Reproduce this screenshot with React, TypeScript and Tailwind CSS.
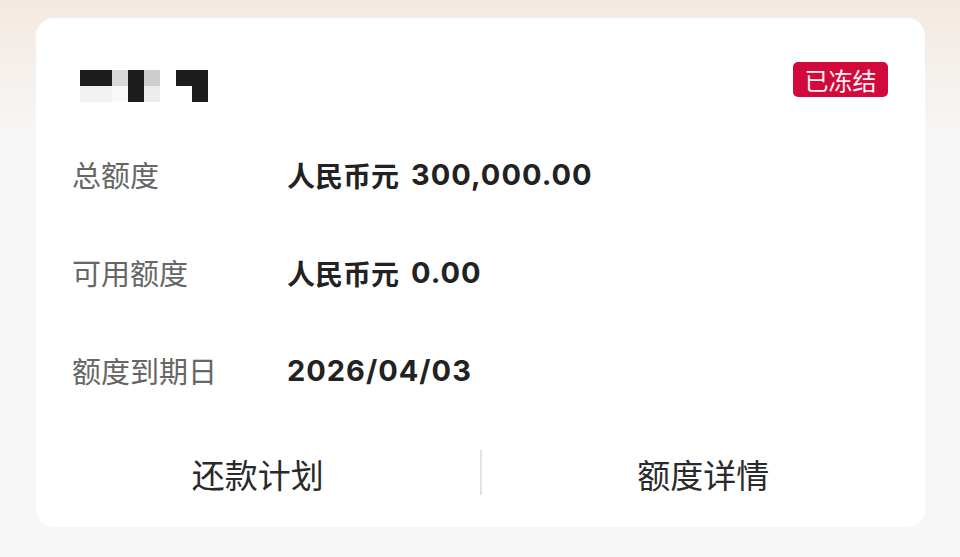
import React from "react";

const cjk = { fontFamily: '"Noto Sans CJK SC", "Noto Sans", sans-serif' };
const num = { fontFamily: 'Inter, Roboto, "Noto Sans CJK SC", sans-serif' };

const D = "#1d1d1d";
const pixels: string[][] = [
  [D, D, "#d8d8d8", D, "#cdcdcd", "#ffffff", D, D],
  ["#f1f1f1", "#f1f1f1", "#f8f8f8", D, "#ececec", "#ffffff", "#ffffff", D],
];

function Row({ label, cn, value }: { label: string; cn?: string; value: string }) {
  return (
    <div className="h-[98px] flex items-center px-[36px]">
      <div className="w-[215px] text-[29px] text-[#666666] leading-none -mt-[3px]" style={cjk}>
        {label}
      </div>
      <div className="flex items-center text-[#222222] font-bold leading-none -mt-[3px]">
        {cn && (
          <span className="text-[28px] mr-[12px]" style={cjk}>
            {cn}
          </span>
        )}
        <span className="text-[29px] tracking-[1px]" style={num}>
          {value}
        </span>
      </div>
    </div>
  );
}

export default function App() {
  return (
    <div className="w-[960px] h-[557px] overflow-hidden bg-[linear-gradient(180deg,#f3e9e1_0px,#f5f0ec_70px,#f7f7f7_140px)] pt-[18px] pl-[36px] pr-[35px]">
      <div className="h-[509px] bg-white rounded-[18px] flex flex-col">
        <div className="mt-[44px] h-[35px] flex items-start justify-between pl-[44px] pr-[37px]">
          <div className="mt-[8px] grid grid-cols-[repeat(8,16px)] grid-rows-[repeat(2,16px)] blur-[0.4px]">
            {pixels.flat().map((c, i) => (
              <div key={i} style={{ backgroundColor: c }} />
            ))}
          </div>
          <div
            className="w-[95px] h-[35px] rounded-[5px] bg-[#d20a3c] text-[#fff2f4] text-[24px] leading-none flex items-center justify-center"
            style={cjk}
          >
            已冻结
          </div>
        </div>
        <div className="mt-[30px]">
          <Row label="总额度" cn="人民币元" value="300,000.00" />
          <Row label="可用额度" cn="人民币元" value="0.00" />
          <Row label="额度到期日" value="2026/04/03" />
        </div>
        <div className="h-[106px] flex items-center">
          <div className="flex-1 flex justify-center text-[33px] text-[#2a2a2a] leading-none" style={cjk}>
            还款计划
          </div>
          <div className="w-[2px] h-[45px] bg-[#e2e2e2] -mt-[4px]" />
          <div className="flex-1 flex justify-center text-[33px] text-[#2a2a2a] leading-none" style={cjk}>
            额度详情
          </div>
        </div>
      </div>
    </div>
  );
}
